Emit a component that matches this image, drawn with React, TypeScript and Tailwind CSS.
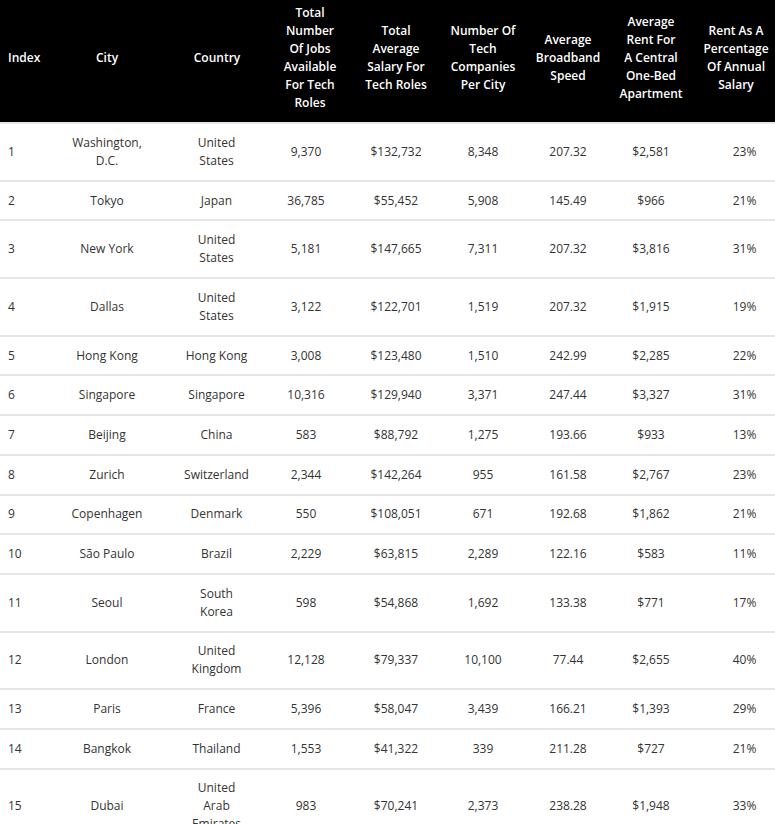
import React from "react";

type Row = [string, string, string, string, string, string, string, string, string];

const rows: Row[] = [
  ["1", "Washington, D.C.", "United States", "9,370", "$132,732", "8,348", "207.32", "$2,581", "23%"],
  ["2", "Tokyo", "Japan", "36,785", "$55,452", "5,908", "145.49", "$966", "21%"],
  ["3", "New York", "United States", "5,181", "$147,665", "7,311", "207.32", "$3,816", "31%"],
  ["4", "Dallas", "United States", "3,122", "$122,701", "1,519", "207.32", "$1,915", "19%"],
  ["5", "Hong Kong", "Hong Kong", "3,008", "$123,480", "1,510", "242.99", "$2,285", "22%"],
  ["6", "Singapore", "Singapore", "10,316", "$129,940", "3,371", "247.44", "$3,327", "31%"],
  ["7", "Beijing", "China", "583", "$88,792", "1,275", "193.66", "$933", "13%"],
  ["8", "Zurich", "Switzerland", "2,344", "$142,264", "955", "161.58", "$2,767", "23%"],
  ["9", "Copenhagen", "Denmark", "550", "$108,051", "671", "192.68", "$1,862", "21%"],
  ["10", "São Paulo", "Brazil", "2,229", "$63,815", "2,289", "122.16", "$583", "11%"],
  ["11", "Seoul", "South Korea", "598", "$54,868", "1,692", "133.38", "$771", "17%"],
  ["12", "London", "United Kingdom", "12,128", "$79,337", "10,100", "77.44", "$2,655", "40%"],
  ["13", "Paris", "France", "5,396", "$58,047", "3,439", "166.21", "$1,393", "29%"],
  ["14", "Bangkok", "Thailand", "1,553", "$41,322", "339", "211.28", "$727", "21%"],
  ["15", "Dubai", "United Arab Emirates", "983", "$70,241", "2,373", "238.28", "$1,948", "33%"],
];

const headers: string[][] = [
  ["Index"],
  ["City"],
  ["Country"],
  ["Total", "Number", "Of Jobs", "Available", "For Tech", "Roles"],
  ["Total", "Average", "Salary For", "Tech Roles"],
  ["Number Of", "Tech", "Companies", "Per City"],
  ["Average", "Broadband", "Speed"],
  ["Average", "Rent For", "A Central", "One-Bed", "Apartment"],
  ["Rent As A", "Percentage", "Of Annual", "Salary"],
];

const thPad = [
  "pl-[8px] pr-0 text-left",
  "px-[8px]",
  "px-[8px]",
  "px-0",
  "px-0",
  "px-0",
  "px-0",
  "px-0",
  "pl-[13px] pr-0",
];

const tdPad = [
  "pl-[8px] pr-0 text-left",
  "px-[8px]",
  "pl-[25px] pr-[26px]",
  "pl-0 pr-[8px]",
  "px-[18px]",
  "px-0",
  "px-[16px]",
  "px-0",
  "pl-[30px] pr-0",
];

const widths = [56, 102, 118, 68, 104, 70, 100, 66, 91];

export default function App() {
  return (
    <div
      className="w-[775px] h-[824px] overflow-hidden bg-white"
      style={{ fontFamily: '"Open Sans", "DejaVu Sans", sans-serif' }}
    >
      <table className="table-fixed border-collapse w-[775px]">
        <colgroup>
          {widths.map((w, i) => (
            <col key={i} style={{ width: w }} />
          ))}
        </colgroup>
        <thead>
          <tr className="bg-black">
            {headers.map((h, i) => (
              <th
                key={i}
                className={`${thPad[i]} pt-[4px] pb-[10px] align-middle text-center text-[12px] leading-[18px] font-semibold text-white whitespace-nowrap`}
              >
                {h.map((line, li) => (
                  <div key={li}>{line}</div>
                ))}
              </th>
            ))}
          </tr>
        </thead>
        <tbody>
          {rows.map((r, ri) => (
            <tr key={ri} className="border-t-2 border-[#e6e6e6]">
              {r.map((c, ci) => (
                <td
                  key={ci}
                  className={`${tdPad[ci]} py-[9.85px] align-middle text-center text-[12px] leading-[18px] font-normal text-[#333333]`}
                >
                  {c}
                </td>
              ))}
            </tr>
          ))}
        </tbody>
      </table>
    </div>
  );
}
